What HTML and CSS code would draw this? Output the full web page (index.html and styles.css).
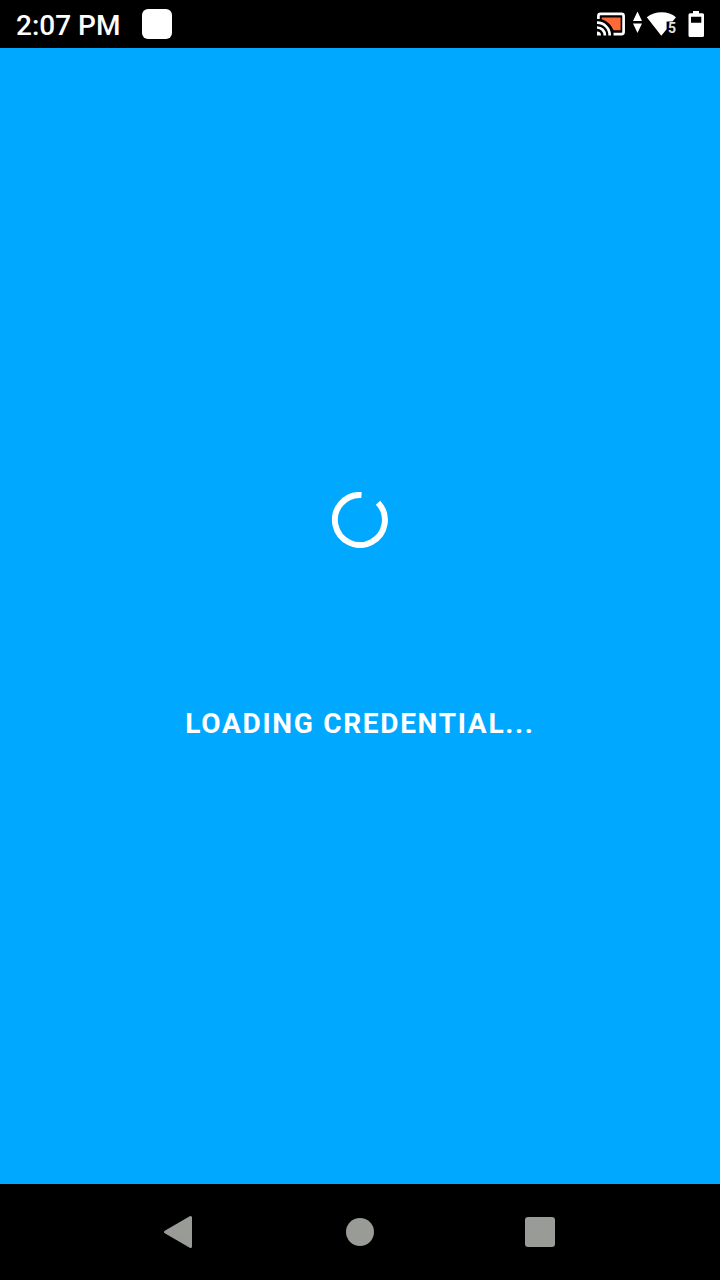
FILE: index.html
```html
<!DOCTYPE html>
<html lang="en">
<head>
<meta charset="utf-8">
<title>Loading credential</title>
<link rel="stylesheet" href="styles.css">
</head>
<body>
<div class="screen">
  <header class="status-bar">
    <span class="clock">2:07 PM</span>
    <span class="notification"></span>
    <svg class="status-icons" width="130" height="48" viewBox="590 0 130 48" aria-hidden="true">
      <path d="M601.700 17.500H620.600V30.300H613.500C611.500 25 607.500 21 601.700 19.200Z" fill="#ff6838"/>
      <path d="M598.400 19V16Q598.400 13.900 600.500 13.900H621.500Q623.600 13.900 623.600 16V32Q623.600 34.100 621.500 34.100H613.500" fill="none" stroke="#fff" stroke-width="2.700"/>
      <path d="M597 22.700A12.500 12.500 0 0 1 609.700 35.400M597 27.500A7.800 7.800 0 0 1 604.900 35.400" fill="none" stroke="#fff" stroke-width="2.700"/>
      <path d="M597 31.400A4 4 0 0 1 601 35.400H597Z" fill="#fff"/>
      <path d="M637.500 11.500L642 21H633ZM633 23.500H642L637.500 33Z" fill="#fff"/>
      <path d="M646.800 17.200C655 10.700 668.500 10.700 676 17.200L672.500 21.500H666.600V29.300L661.300 35.700Z" fill="#fff"/>
      <text class="wifi-band" x="668" y="33">5</text>
      <path fill-rule="evenodd" d="M693 11H699V13.300H702.500Q704 13.300 704 14.800V35.500Q704 37 702.500 37H690Q688.500 37 688.500 35.500V14.800Q688.500 13.300 690 13.300H693ZM691 16.700V22.700H701.300V16.700Z" fill="#fff"/>
    </svg>
  </header>
  <main class="content">
    <svg class="spinner" width="56" height="56" viewBox="0 0 56 56" aria-hidden="true">
      <path d="M29.500 3A25 25 0 1 0 46 10.700" fill="none" stroke="#fff" stroke-width="6"/>
    </svg>
    <p class="message">LOADING CREDENTIAL...</p>
  </main>
  <nav class="nav-bar">
    <span class="nav-item">
      <svg class="back" width="32" height="34" viewBox="0 0 32 34" aria-hidden="true"><path d="M28.500 2.500V31.500L3.500 17Z" fill="#999b97" stroke="#999b97" stroke-width="3" stroke-linejoin="round"/></svg>
    </span>
    <span class="nav-item"><span class="home"></span></span>
    <span class="nav-item"><span class="recents"></span></span>
  </nav>
</div>
</body>
</html>
```

FILE: styles.css
```css
body {
  margin: 0;
  font-family: Roboto, sans-serif;
  color: #fff;
}

.screen {
  display: flex;
  flex-direction: column;
  height: 1280px;
  background: #000;
}

.status-bar {
  display: flex;
  align-items: center;
  height: 48px;
  padding-left: 16px;
}

.clock {
  width: 126px;
  padding-top: 2px;
  font-size: 28px;
  font-weight: 500;
  white-space: nowrap;
}

.notification {
  width: 30px;
  height: 30px;
  border-radius: 6px;
  background: #fff;
}

.status-icons {
  margin-left: auto;
}

.wifi-band {
  fill: #e4e4e4;
  font-size: 14px;
  font-weight: 700;
}

.content {
  display: flex;
  flex: 1;
  flex-direction: column;
  align-items: center;
  padding-top: 444px;
  box-sizing: border-box;
  background: #00a8ff;
}

.message {
  margin: 156px 0 0;
  font-size: 28px;
  line-height: 40px;
  font-weight: 700;
  letter-spacing: 1.7px;
  white-space: nowrap;
}

.nav-bar {
  display: grid;
  grid-template-columns: repeat(3, 180px);
  justify-content: center;
  height: 96px;
}

.nav-item {
  display: flex;
  align-items: center;
  justify-content: center;
}

.back {
  margin-right: 4px;
}

.home {
  width: 28px;
  height: 28px;
  border-radius: 50%;
  background: #999b97;
}

.recents {
  width: 30px;
  height: 30px;
  border-radius: 3px;
  background: #999b97;
}
```
